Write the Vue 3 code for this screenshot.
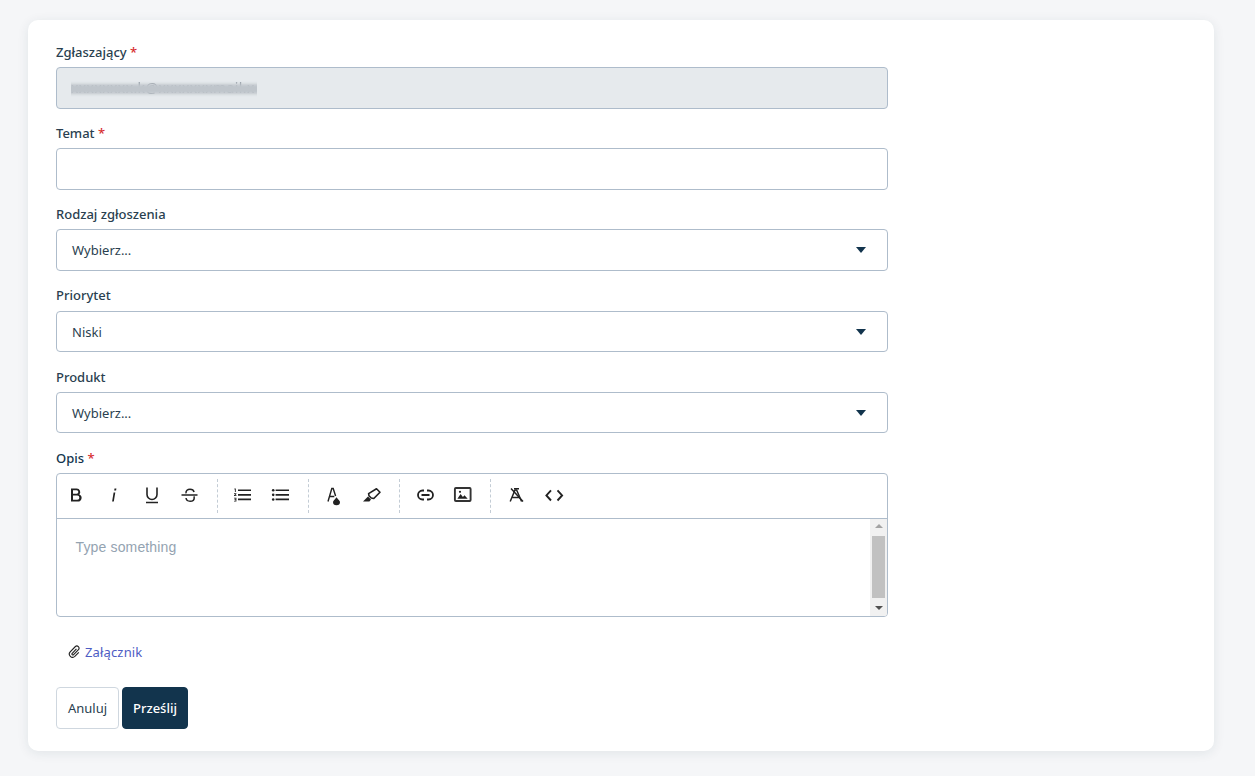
<script setup>
const iconGroups = [
  ['bold', 'italic', 'underline', 'strike'],
  ['ol', 'ul'],
  ['color', 'marker'],
  ['link', 'image'],
  ['clear', 'code'],
]
</script>

<template>
  <main class="page">
    <form class="card" @submit.prevent>
      <div class="field">
        <label class="label">Zgłaszający <span class="req">*</span></label>
        <div class="input disabled">
          <div class="redacted">
            <span class="email">xxxxxxxx.k@xxxxxxxmail.x</span>
            <span class="mask"></span>
          </div>
        </div>
      </div>
      <div class="field">
        <label class="label">Temat <span class="req">*</span></label>
        <div class="input"></div>
      </div>
      <div class="field">
        <label class="label">Rodzaj zgłoszenia</label>
        <div class="input select">Wybierz...<i class="caret"></i></div>
      </div>
      <div class="field">
        <label class="label">Priorytet</label>
        <div class="input select">Niski<i class="caret"></i></div>
      </div>
      <div class="field">
        <label class="label">Produkt</label>
        <div class="input select">Wybierz...<i class="caret"></i></div>
      </div>
      <div class="field editor-field">
        <label class="label dark">Opis <span class="req">*</span></label>
        <div class="editor">
          <div class="toolbar">
            <template v-for="(group, gi) in iconGroups" :key="gi">
              <span v-if="gi" class="sep"></span>
              <button v-for="name in group" :key="name" type="button" class="tool" :aria-label="name">
                <svg viewBox="0 0 24 24" width="24" height="24">
                  <path v-if="name === 'bold'" fill="#222" fill-rule="evenodd"
                    d="M7 5.5h5.8a3.5 3.5 0 0 1 2.5 5.9 3.7 3.7 0 0 1-1.8 7.1H7zM9 7.3v3.5h3.6a1.75 1.75 0 0 0 0-3.5zM9 12.6v4.1h4.3a2.05 2.05 0 0 0 0-4.1z" />
                  <path v-else-if="name === 'italic'" d="M11.6 9.5h1.7l-1.5 9h-1.7zM12.5 5.5h1.9l-.3 1.9h-1.9z" fill="#222" />
                  <g v-else-if="name === 'underline'" fill="none" stroke="#222" stroke-width="1.6">
                    <path d="M7 4.5v7a5 5 0 0 0 10 0v-7" />
                    <path d="M6 19.5h12" />
                  </g>
                  <g v-else-if="name === 'strike'" fill="none" stroke="#222" stroke-width="1.5">
                    <path d="M3.5 12h16" />
                    <path d="M8 10.3C7.7 7.6 9.6 6.2 12 6.2c2.1 0 3.7 1.1 4.1 2.8M8 15c.3 1.9 2 3.2 4.1 3.2 2.4 0 4.1-1.3 4.1-3.3 0-.6-.1-1.1-.4-1.5" />
                  </g>
                  <g v-else-if="name === 'ol'" fill="#222">
                    <path d="M7 6.4h13v1.7H7zM7 11h13v1.7H7zM7 15.6h13v1.7H7z" />
                    <path d="M3.4 5.5h1.4v3.6h-.9V6.4h-.5zM3 10.2h2.4v.9l-1.1 1.2h1.2v.8H3v-.8l1.3-1.3H3zM3 14.8h2.4v3.7H3v-.7h1.5v-.8H3.5v-.7h1v-.8H3z" />
                  </g>
                  <g v-else-if="name === 'ul'" fill="#222">
                    <path d="M6.6 6.4H20v1.7H6.6zM6.6 11H20v1.7H6.6zM6.6 15.6H20v1.7H6.6z" />
                    <circle cx="4.2" cy="7.25" r="1.3" /><circle cx="4.2" cy="11.85" r="1.3" /><circle cx="4.2" cy="16.45" r="1.3" />
                  </g>
                  <g v-else-if="name === 'color'">
                    <path d="M6 18.5 9.8 5.5h1.4l2.4 7.5M7.3 13.5h5" fill="none" stroke="#222" stroke-width="1.4" />
                    <path d="M14.5 14.2c2 2.5 3.5 3.6 3.5 4.9a3.5 3.2 0 0 1-7 0c0-1.3 1.5-2.4 3.5-4.9z" fill="#222" />
                  </g>
                  <g v-else-if="name === 'marker'">
                    <path d="M16.5 5.8 20 9.2l-6.2 6.3-2.6-.5-2.2-2.2-.4-2.2z" fill="none" stroke="#222" stroke-width="1.6" stroke-linejoin="round" />
                    <path d="M8 13.6 11 16.6l-1.6 1.9H3z" fill="#222" />
                  </g>
                  <g v-else-if="name === 'link'" fill="none" stroke="#222" stroke-width="1.8">
                    <path d="M11 7.5H9.5a4.5 4.5 0 0 0 0 9H11M14 7.5h1.5a4.5 4.5 0 0 1 0 9H14M8.5 12h8" />
                  </g>
                  <g v-else-if="name === 'image'">
                    <rect x="3.9" y="5" width="15.7" height="13" rx="1" fill="none" stroke="#333" stroke-width="1.9" />
                    <path d="M6.4 15.8 9.6 11l2.3 3 1.6-1.7 3.2 3.5z" fill="#222" />
                    <circle cx="9" cy="8.8" r="1.1" fill="#222" />
                  </g>
                  <g v-else-if="name === 'clear'" fill="none" stroke="#222" stroke-width="1.5">
                    <path d="M6.2 18.5 11 7h1.6l5 11.5M8.6 14.6h7" />
                    <path d="M7 5.5 19 18.5M10 5.7h5" />
                  </g>
                  <g v-else fill="none" stroke="#222" stroke-width="1.9">
                    <path d="M9 7.3 4.4 12.4 9 17.5M15.5 7.3l4.6 5.1-4.6 5.1" />
                  </g>
                </svg>
              </button>
            </template>
          </div>
          <div class="body">
            <div class="placeholder">Type something</div>
            <div class="scrollbar">
              <i class="arrow up"></i>
              <span class="thumb"></span>
              <i class="arrow down"></i>
            </div>
          </div>
        </div>
      </div>
      <a class="attach" href="#" @click.prevent>
        <svg viewBox="0 0 16 16" width="13" height="13">
          <path d="M10.4 4.8 5.2 10.2a1.2 1.2 0 0 0 1.7 1.7l6-6.2a2.7 2.7 0 0 0-3.8-3.8L2.7 8.4a4 4 0 0 0 5.7 5.6l4.9-5" fill="none" stroke="#222" stroke-width="1.4" />
        </svg>
        <span>Załącznik</span>
      </a>
      <div class="actions">
        <button type="button" class="btn ghost">Anuluj</button>
        <button type="submit" class="btn primary">Prześlij</button>
      </div>
    </form>
  </main>
</template>

<style>
html, body { background: #f5f6f8; }
</style>

<style scoped>
* { box-sizing: border-box; }
.page {
  height: 776px;
  padding: 20px 41px 25px 28px;
  overflow: hidden;
  font-family: "Noto Sans", "Open Sans", sans-serif;
  font-size: 13px;
  color: #12344d;
}
.card {
  height: 731px;
  padding: 21.9px 28px 22px;
  background: #fff;
  border-radius: 10px;
  box-shadow: 0 2px 12px rgba(24, 50, 71, 0.09);
}
.field { width: 832px; margin-bottom: 14.5px; }
.editor-field { margin-bottom: 0; }
.label {
  display: block;
  height: 25.1px;
  line-height: 20px;
  font-weight: 500;
  color: #2a3f50;
}
.label.dark { color: #12344d; }
.req { color: #d72d30; }
.input {
  position: relative;
  height: 41.6px;
  line-height: 40px;
  padding: 0 15px;
  background: #fff;
  border: 1px solid #aebccb;
  border-radius: 4px;
}
.disabled { background: #e6eaed; }
.redacted {
  position: absolute;
  left: 14px;
  top: 0;
  bottom: 0;
  width: 186px;
  overflow: hidden;
}
.email {
  position: absolute;
  left: 0;
  top: 0;
  white-space: nowrap;
  font-size: 14px;
  letter-spacing: 0.4px;
  color: #98a0a8;
  filter: blur(0.6px);
}
.mask {
  position: absolute;
  left: -6px;
  right: -6px;
  top: 16px;
  height: 10px;
  background: #bfc5cb;
  filter: blur(1.4px);
}
.select { color: #2a3f50; }
.caret {
  position: absolute;
  right: 21px;
  top: 17px;
  border: 5.5px solid transparent;
  border-top: 6px solid #12344d;
  border-bottom: 0;
}
.editor {
  height: 144px;
  border: 1px solid #aebccb;
  border-radius: 4px;
  overflow: hidden;
}
.toolbar {
  display: flex;
  align-items: center;
  height: 45px;
  border-bottom: 1px solid #aebccb;
}
.tool {
  display: flex;
  align-items: center;
  justify-content: center;
  flex: none;
  width: 38px;
  height: 44px;
  padding: 0;
  background: none;
  border: 0;
}
.tool svg { margin-bottom: 1px; }
.sep {
  flex: none;
  width: 1px;
  height: 34px;
  margin: 0 6px 0 8px;
  border-left: 1px dashed #c3ccd5;
}
.body { display: flex; height: 98px; }
.placeholder {
  flex: 1;
  padding: 20px 18.5px;
  font-family: "Liberation Sans", Arial, sans-serif;
  font-size: 14px;
  letter-spacing: 0.15px;
  line-height: 16px;
  color: #94a3b1;
}
.scrollbar {
  display: flex;
  flex: none;
  flex-direction: column;
  align-items: center;
  width: 17px;
  background: #f1f1f1;
}
.arrow {
  display: block;
  height: 17px;
  width: 17px;
  position: relative;
}
.arrow::before {
  content: "";
  position: absolute;
  left: 4.5px;
  border: 4px solid transparent;
}
.arrow.up::before { top: 5px; border-top: 0; border-bottom: 4px solid #a3a3a3; }
.arrow.down::before { top: 6px; border-bottom: 0; border-top: 4px solid #505050; }
.thumb { flex: 1; width: 13px; background: #c1c1c1; margin-bottom: 2px; }
.attach {
  display: inline-flex;
  align-items: center;
  gap: 4px;
  margin: 25px 0 0 12px;
  height: 20px;
  line-height: 20px;
  color: #4d5cc4;
  letter-spacing: 0.15px;
  text-decoration: none;
}
.actions { display: flex; gap: 3px; margin-top: 25px; }
.btn {
  height: 42px;
  padding: 0;
  border-radius: 4px;
  font: 400 13px "Noto Sans", "Open Sans", sans-serif;
}
.ghost { width: 63px; background: #fff; border: 1px solid #cfd7df; color: #2a3f50; }
.primary { width: 66px; background: #12344d; border: 1px solid #12344d; color: #fff; font-weight: 500; }
</style>
